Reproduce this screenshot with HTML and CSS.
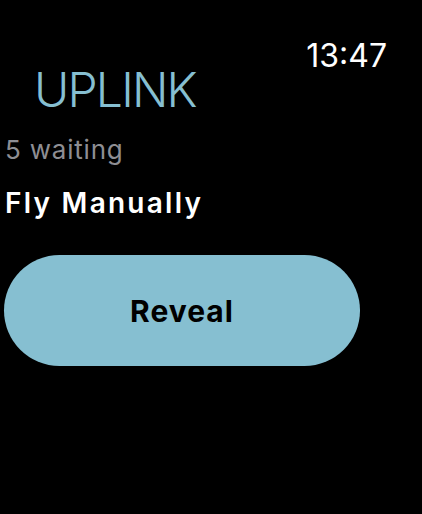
FILE: index.html
```html
<!DOCTYPE html>
<html>
<head>
<meta charset="utf-8">
<link rel="stylesheet" href="styles.css">
</head>
<body>
<div class="screen">
  <div class="status">
    <div class="time">13:47</div>
  </div>
  <div class="title">UPLINK</div>
  <div class="content">
    <div class="subtitle">5 waiting</div>
    <div class="heading">Fly Manually</div>
    <button class="reveal">Reveal</button>
  </div>
</div>
</body>
</html>
```
FILE: styles.css
```css
html, body {
  margin: 0;
  padding: 0;
  background: #000;
}
.screen {
  width: 422px;
  height: 514px;
  background: #000;
  font-family: Inter, Roboto, sans-serif;
  color: #fff;
  display: flex;
  flex-direction: column;
}
.status {
  display: flex;
  justify-content: flex-end;
  padding: 39px 35px 0 0;
  height: 34px;
}
.time {
  font-size: 32px;
  line-height: 34px;
  color: #fff;
}
.title {
  margin-top: -7px;
  font-size: 48px;
  font-weight: 300;
  line-height: 48px;
  letter-spacing: -1.8px;
  color: #86bfd1;
  padding-left: 34px;
}
.content {
  display: flex;
  flex-direction: column;
  padding-left: 5px;
}
.subtitle {
  margin-top: 21px;
  font-size: 26px;
  line-height: 30px;
  letter-spacing: 0.8px;
  color: #8e8e93;
}
.heading {
  margin-top: 22px;
  font-size: 28px;
  font-weight: 600;
  line-height: 32px;
  letter-spacing: 2.25px;
  color: #fff;
}
.reveal {
  margin-top: 36px;
  margin-left: -1px;
  width: 356px;
  height: 111px;
  border: none;
  border-radius: 56px;
  background: #86bfd1;
  color: #000;
  font-family: Inter, Roboto, sans-serif;
  font-size: 30px;
  font-weight: 700;
  letter-spacing: 1px;
  padding: 0;
}
```
